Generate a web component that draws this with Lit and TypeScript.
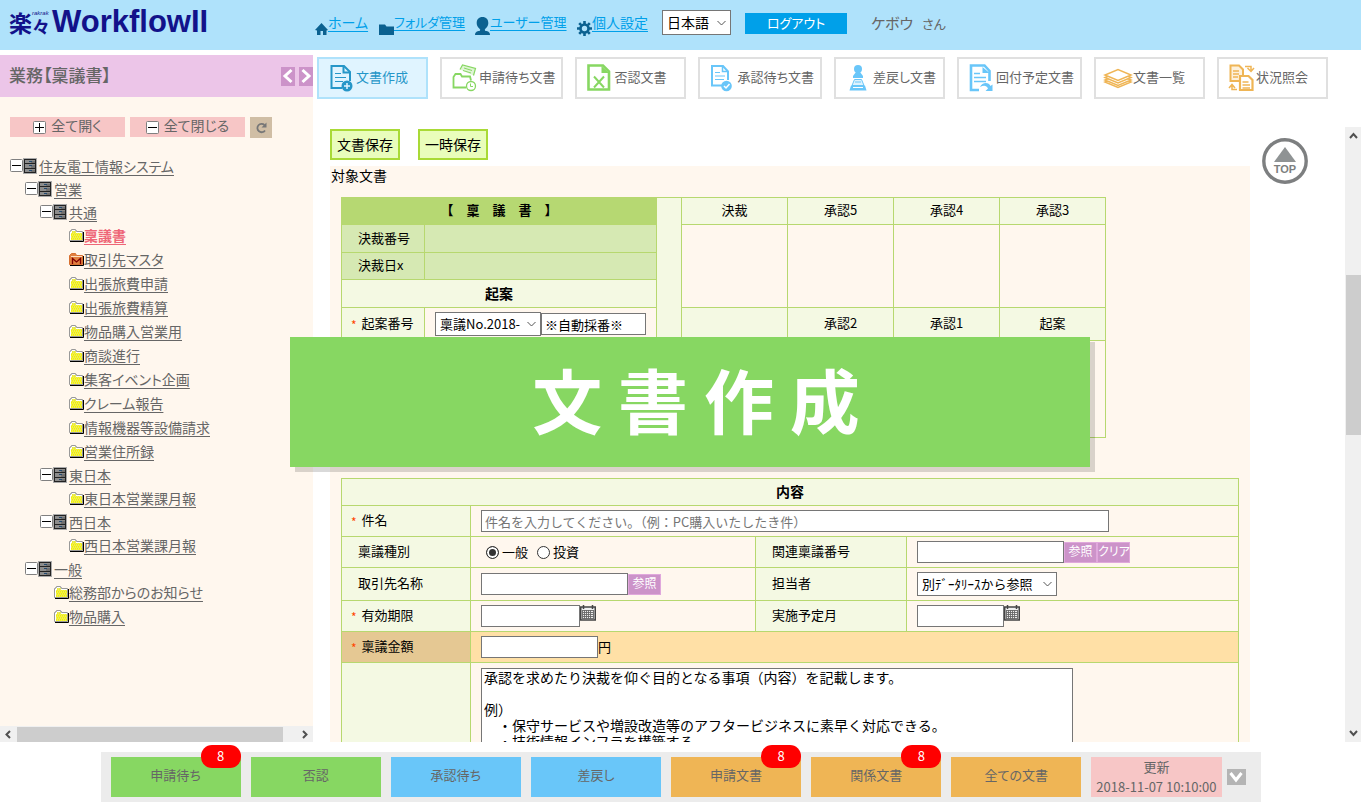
import { LitElement, html, css, svg, nothing } from "lit";
import { customElement } from "lit/decorators.js";
import { classMap } from "lit/directives/class-map.js";

type TreeNode = { level: number; kind: "cabinet" | "folder" | "master"; label: string; current?: boolean };

const TREE: TreeNode[] = [
  { level: 0, kind: "cabinet", label: "住友電工情報システム" },
  { level: 1, kind: "cabinet", label: "営業" },
  { level: 2, kind: "cabinet", label: "共通" },
  { level: 3, kind: "folder", label: "稟議書", current: true },
  { level: 3, kind: "master", label: "取引先マスタ" },
  { level: 3, kind: "folder", label: "出張旅費申請" },
  { level: 3, kind: "folder", label: "出張旅費精算" },
  { level: 3, kind: "folder", label: "物品購入営業用" },
  { level: 3, kind: "folder", label: "商談進行" },
  { level: 3, kind: "folder", label: "集客イベント企画" },
  { level: 3, kind: "folder", label: "クレーム報告" },
  { level: 3, kind: "folder", label: "情報機器等設備請求" },
  { level: 3, kind: "folder", label: "営業住所録" },
  { level: 2, kind: "cabinet", label: "東日本" },
  { level: 3, kind: "folder", label: "東日本営業課月報" },
  { level: 2, kind: "cabinet", label: "西日本" },
  { level: 3, kind: "folder", label: "西日本営業課月報" },
  { level: 1, kind: "cabinet", label: "一般" },
  { level: 2, kind: "folder", label: "総務部からのお知らせ" },
  { level: 2, kind: "folder", label: "物品購入" },
];

const toggleIcon = (plus: boolean) => html`<svg class="ic" width="13" height="13" viewBox="0 0 13 13">
  <rect x=".5" y=".5" width="12" height="12" rx="1" fill="#fff" stroke="#808080" />
  <path d=${plus ? "M2 6.5h9M6.5 2v9" : "M2 6.5h9"} stroke="#000" fill="none" />
</svg>`;

const cabinetIcon = html`<svg class="ic" width="14" height="16" viewBox="0 0 14 16">
  <rect width="14" height="16" fill="#aaa" />
  <rect x="1" y="1" width="12" height="14" fill="#222" />
  <path d="M2 2h10v3H2zM2 6h10v4H2zM2 11h10v3H2z" fill="#8c8c8c" />
  <path d="M8 3h4v2H8zM8 7h4v3H8zM8 12h4v2H8z" fill="#707070" />
  <path d="M6 3h3v1H6zM6 7h3v1H6zM6 12h3v1H6z" fill="#234a70" />
</svg>`;

const folderIcon = html`<svg class="ic" width="15" height="13" viewBox="0 0 15 13">
  <path d="M1 12.5h13.5V3" stroke="#000" fill="none" />
  <path d="M.5 11.5v-9h1v-1h1v-1h4v1h1v1h6v9z" fill="#fff" stroke="#999" />
  <path d="M2 11V4h1V2h4v2h6v7z" fill="#e6e66a" />
  <path d="M3 4.5h10M2 6.5h11M3 8.5h10M2 10.5h11" stroke="#ffff00" stroke-dasharray="1 1" />
  <path d="M2 5.5h11M3 7.5h10M2 9.5h11M3 3h3" stroke="#f4f000" stroke-dasharray="1 1" />
</svg>`;

const masterIcon = html`<svg class="ic" width="15" height="13" viewBox="0 0 15 13">
  <path d="M1 12.5h13.5V3" stroke="#000" fill="none" />
  <path d="M.5 11.5v-9l2-2h4l1 2h6v9z" fill="#e08040" stroke="#d87030" />
  <path d="M2 3.5h11" stroke="#ffe0c0" />
  <path d="M3.5 11V5.5L7.5 9l4-3.500V11" stroke="#800000" stroke-width="1.3" fill="none" />
</svg>`;

const TAB_ICONS = {
  create: svg`<path d="M13 24H2.500V2h12.500l6 6v9" fill="none" stroke="#2596c8" stroke-width="2"/>
    <path d="M14.500 2v6.500H21" fill="none" stroke="#2596c8" stroke-width="2"/>
    <path d="M6 9.500h6M6 13.500h11M6 17.500h8" stroke="#2596c8" stroke-width="1.200"/>
    <circle cx="18" cy="22" r="5.500" fill="#2596c8"/><path d="M15 22h6M18 19v6" stroke="#e0f4ff" stroke-width="1.500"/>`,
  wait: svg`<path d="M8 5.500l2.500-4.500 13 3.500-2 7" fill="#dff5d4" stroke="#87d762" stroke-width="1.200"/>
    <path d="M12 4l8 2.500M11 6.500l8 2.500" stroke="#87d762"/>
    <path d="M14 23.500H1.500V13l2-3H8.500l1.500 2.500h8l1 4" fill="none" stroke="#87d762" stroke-width="1.800"/>
    <circle cx="19" cy="22" r="4.500" fill="#fff" stroke="#87d762" stroke-width="1.300"/><path d="M18.500 19.500v3h2.500" fill="none" stroke="#87d762"/>`,
  deny: svg`<path d="M1.500 1.500h14.500l6 6v18h-20.500z" fill="none" stroke="#87d762" stroke-width="2.600"/><path d="M14.500 2v7h7.500z" fill="#87d762"/>
    <path d="M7 12.500l10 11M17 12.500L7 23.500" stroke="#87d762" stroke-width="2"/>`,
  approve: svg`<path d="M12 21.500H2V2h11l5 5.500v8.500" fill="none" stroke="#69c6f9" stroke-width="2"/><path d="M12.500 2v5.500H18" fill="none" stroke="#69c6f9" stroke-width="1.500"/>
    <path d="M5 8.500h5M5 12h10M5 15.500h9" stroke="#69c6f9" stroke-width="1.200"/>
    <circle cx="16.500" cy="22" r="5.300" fill="#69c6f9"/><path d="M14 22l2 2 3.500-4" stroke="#fff" stroke-width="1.500" fill="none"/>`,
  back: svg`<circle cx="12" cy="5" r="4" fill="#69c6f9"/><path d="M10 8h4l3 4v2H7v-2z" fill="#69c6f9"/>
    <path d="M8.500 15.500h7l2.500 6H6z" fill="#dff2fd" stroke="#69c6f9"/><path d="M9 18h6" stroke="#69c6f9"/>
    <path d="M5 21.500h14l1.500 5h-17z" fill="#69c6f9"/><path d="M7 23.500h10" stroke="#fff"/>`,
  pass: svg`<path d="M10 26H2V1.500h13.500l5 5.500v10" fill="none" stroke="#69c6f9" stroke-width="2.600"/><path d="M13.500 3v6h7z" fill="#69c6f9"/>
    <path d="M5 9.500h6M5 13.500h12M5 17.500h12" stroke="#69c6f9" stroke-width="1.400"/>
    <path d="M11 23c2-5 9-5 10.500-1l2-1.500v6.500h-7l2.500-2.500c-1.500-3-4-3.500-8-1.500z" fill="#69c6f9"/>`,
  list: svg`<g fill="#fff" stroke="#efb555" stroke-width="1.500"><path d="M-1 18l13 5.500 13-5.500-13-5.500z"/><path d="M-1 16l13 5.500 13-5.500-13-5.500z"/><path d="M-1 13.500l13 5.500 13-5.500-13-5.500z"/><path d="M-1 11l13 5.500 13-5.500-13-5.500z"/></g>`,
  status: svg`<path d="M1.500 1.500h8.500l4 4V17H1.500z" fill="#fdf1dc" stroke="#efb555" stroke-width="2"/><path d="M4 7h6M4 10h6M4 13h5" stroke="#efb555" stroke-width="1.500"/>
    <path d="M11 12h8.500l4 4v10H11z" fill="#fff" stroke="#efb555" stroke-width="2.200"/><path d="M13.500 18h6M13.500 21h7.500M13.500 24h7.500" stroke="#efb555" stroke-width="1.400"/>
    <path d="M16 2.500h6v4M18.500 4l3.500 3.500L25 4M8 25.500H3v-4M0 24l3-3.500L6 24" fill="none" stroke="#efb555" stroke-width="1.500"/>`,
};

const TABS: { icon: keyof typeof TAB_ICONS; label: string; active?: boolean }[] = [
  { icon: "create", label: "文書作成", active: true },
  { icon: "wait", label: "申請待ち文書" },
  { icon: "deny", label: "否認文書" },
  { icon: "approve", label: "承認待ち文書" },
  { icon: "back", label: "差戻し文書" },
  { icon: "pass", label: "回付予定文書" },
  { icon: "list", label: "文書一覧" },
  { icon: "status", label: "状況照会" },
];

const NAV = [
  { label: "ホーム", w: "n1", icon: svg`<path d="M0 8l6.500-7L13 8l-1.500.500V13H8V9H5.500v4H2V8.500z" fill="#0b6190"/>` },
  { label: "フォルダ管理", w: "n2", icon: svg`<path d="M0 3.500V2.500h6l1.500 2H15V13H0z" fill="#0b6190"/>` },
  { label: "ユーザー管理", w: "n3", icon: svg`<path d="M7.500-5c3.800 0 5.800 2.500 5.800 6S11 6 9.800 7.500c0 1 .5 1.500 1.700 1.500C14 9.500 15 11 15 13H0c0-2 1-3.500 3.500-4 1.200 0 1.700-.5 1.700-1.500C4 6 1.700 4.500 1.700 1s2-6 5.800-6z" fill="#0b6190"/>` },
  { label: "個人設定", w: "n4", icon: svg`<circle cx="7.500" cy="6.500" r="4" fill="none" stroke="#0b6190" stroke-width="2.600"/><path d="M7.500-1v3M7.500 11v3M0 6.500h3M12 6.500h3M2.200 1.200l2 2M10.800 9.800l2 2M12.800 1.200l-2 2M4.200 9.800l-2 2" stroke="#0b6190" stroke-width="2.600"/>` },
];

const FOOTER = [
  { label: "申請待ち", tone: "green", count: 8 },
  { label: "否認", tone: "green" },
  { label: "承認待ち", tone: "blue" },
  { label: "差戻し", tone: "blue" },
  { label: "申請文書", tone: "orange", count: 8 },
  { label: "関係文書", tone: "orange", count: 8 },
  { label: "全ての文書", tone: "orange" },
];

const PURPOSE = `承認を求めたり決裁を仰ぐ目的となる事項（内容）を記載します。

例）
　・保守サービスや増設改造等のアフタービジネスに素早く対応できる。
　・技術情報インフラを構築する`;

const base = css`
  * { box-sizing: border-box; }
  button, input, select, textarea { font: inherit; margin: 0; border-radius: 0; }
  button { padding: 0; border: 0; cursor: pointer; }
  .ic { display: block; flex: none; overflow: visible; }
`;

@customElement("wf-header")
class WfHeader extends LitElement {
  static styles = [base, css`
    :host { display: flex; align-items: center; height: 50px; background: #afe2fb; color: #666; }
    .logo { display: flex; align-items: center; width: 315px; padding: 0 0 6px 9px; color: #12128a; white-space: nowrap; flex: none; height: 50px; }
    .raku { font-size: 23px; line-height: 26px; font-weight: 700; }
    .stack { display: flex; flex-direction: column; width: 20px; }
    .noma { font-size: 18px; line-height: 18px; font-weight: 700; }
    .tiny { font: italic 6px/7px "Liberation Sans", sans-serif; }
    .name { font: 700 31px/44px "Liberation Sans", sans-serif; }
    nav { display: flex; }
    a { display: flex; align-items: flex-end; height: 24px; color: #00a0e9; font-size: 14px; line-height: 20px; text-underline-offset: 3px; white-space: nowrap; font-feature-settings: "palt"; margin-bottom: 4px; text-decoration: none; }
    a span { text-decoration: underline; margin-bottom: 3px; }
    .n1 { width: 64px; } .n2 { width: 96px; font-size: 13px; } .n3 { width: 102px; font-size: 13px; } .n4 { width: 85px; }
    select { width: 69px; height: 25px; margin-bottom: 5px; border: 1px solid #767676; background: #fff url("data:image/svg+xml,%3Csvg xmlns='http://www.w3.org/2000/svg' width='9' height='6'%3E%3Cpath d='M.5 1l4 4 4-4' fill='none' stroke='%23555'/%3E%3C/svg%3E") no-repeat right 4px center; appearance: none; font-size: 14px; line-height: 20px; padding: 0 0 2px 4px; color: #000; }
    .out { width: 102px; height: 21px; margin: 0 24px 3px 14px; background: #00a0e9; color: #fff; font-size: 13px; line-height: 18px; padding-bottom: 2px; font-feature-settings: "palt"; }
    .user { font-size: 15px; margin-bottom: 6px; font-feature-settings: "palt"; }
    .san { font-size: 13px; margin-left: 9px; }
  `];
  render() {
    return html`
      <div class="logo"><span class="raku">楽</span><span class="stack"><span class="tiny">rakrak</span><span class="noma">々</span></span><span class="name">WorkflowII</span></div>
      <nav>${NAV.map((n) => html`<a href="#" class=${n.w}><svg class="ic" width=${n.w === "n1" ? 13 : 15} height="13" viewBox="0 0 ${n.w === "n1" ? 13 : 15} 13">${n.icon}</svg><span>${n.label}</span></a>`)}</nav>
      <select aria-label="言語"><option>日本語</option></select>
      <button class="out">ログアウト</button>
      <span class="user">ケボウ<span class="san">さん</span></span>
    `;
  }
}

@customElement("wf-sidebar")
class WfSidebar extends LitElement {
  static styles = [base, css`
    :host { display: flex; flex-direction: column; width: 313px; flex: none; background: #fff7ee; color: #666; min-height: 0; }
    .title { display: flex; align-items: center; gap: 4px; height: 42px; padding-left: 9px; background: #ecc5e8; flex: none; }
    h1 { flex: 1; margin: 0; font-size: 17px; line-height: 24px; font-weight: 500; font-feature-settings: "palt"; padding-bottom: 2px; }
    .arrow { width: 14px; height: 19px; background: #cc93c9; display: grid; place-items: center; }
    .tools { display: flex; gap: 5px; padding: 20px 10px 0; height: 57px; flex: none; }
    .tool { display: flex; align-items: center; justify-content: center; gap: 5px; width: 115px; height: 20px; background: #f7c6c6; color: #666; font-size: 14px; line-height: 16px; font-feature-settings: "palt"; }
    .tool span { margin-bottom: 4px; }
    .reload { width: 22px; height: 21px; background: #d0bea5; display: grid; place-items: center; }
    .tree { flex: 1; margin: 0; padding: 0; list-style: none; overflow: hidden; min-height: 0; }
    li { display: flex; align-items: center; height: 24px; }
    li.cabinet { height: 23px; }
    li.cabinet a { margin-left: 2px; }
    li a { color: #666; font-size: 14px; line-height: 20px; text-underline-offset: 3px; white-space: nowrap; font-feature-settings: "palt"; }
    li.current a { color: #ee6677; font-weight: 700; }
    .l2 { padding-left: 54px; } .l3 { padding-left: 69px; }
    .cabinet.l0 { padding-left: 10px; } .cabinet.l1 { padding-left: 25px; } .cabinet.l2 { padding-left: 40px; }
    .toggle { background: none; }
    .bar { display: flex; align-items: center; height: 16px; background: #f0f0f0; flex: none; }
    .bar .ic { margin: 0 4px; }
    .thumb { flex: 1; height: 15px; background: #cdcdcd; margin-right: 13px; }
  `];
  render() {
    return html`
      <div class="title">
        <h1>業務【稟議書】</h1>
        <button class="arrow" aria-label="縮小"><svg class="ic" width="10" height="14" viewBox="0 0 10 14"><path d="M8.500 1L2 7l6.500 6" fill="none" stroke="#fff" stroke-width="3"/></svg></button>
        <button class="arrow" aria-label="拡大"><svg class="ic" width="10" height="14" viewBox="0 0 10 14"><path d="M1.500 1L8 7l-6.500 6" fill="none" stroke="#fff" stroke-width="3"/></svg></button>
      </div>
      <div class="tools">
        <button class="tool">${toggleIcon(true)}<span>全て開く</span></button>
        <button class="tool">${toggleIcon(false)}<span>全て閉じる</span></button>
        <button class="reload" aria-label="再読込"><svg class="ic" width="11" height="11" viewBox="0 0 11 11"><path d="M9 8.500A4.200 4.200 0 1 1 8.500 3" fill="none" stroke="#777" stroke-width="1.800"/><path d="M10.500.5v5H5.500z" fill="#777"/></svg></button>
      </div>
      <ul class="tree">
        ${TREE.map((n) => html`<li class=${classMap({ [n.kind]: true, ["l" + n.level]: true, current: !!n.current })}>
          ${n.kind === "cabinet"
            ? html`<button class="toggle" aria-label="${n.label}を閉じる">${toggleIcon(false)}</button>${cabinetIcon}`
            : n.kind === "master" ? masterIcon : folderIcon}<a href="#">${n.label}</a>
        </li>`)}
      </ul>
      <div class="bar">
        <svg class="ic" width="9" height="9" viewBox="0 0 9 9"><path d="M6 1L2.500 4.500 6 8" fill="none" stroke="#505050" stroke-width="2"/></svg>
        <div class="thumb"></div>
        <svg class="ic" width="9" height="9" viewBox="0 0 9 9"><path d="M3 1l3.500 3.500L3 8" fill="none" stroke="#505050" stroke-width="2"/></svg>
      </div>
    `;
  }
}

@customElement("wf-form")
class WfForm extends LitElement {
  static styles = [base, css`
    :host { display: block; color: #000; font-size: 13px; }
    .actions { display: flex; gap: 18px; }
    .save { width: 70px; height: 31px; border: 2px solid #a9da36; background: #e9fdbb; font-size: 14px; line-height: 20px; padding-bottom: 2px; color: #000; }
    .sheet { margin-top: 6px; padding: 0 11px 20px; background: #fff7ee; }
    .caption { margin: 0 -10px; font-size: 14px; line-height: 18px; height: 31px; }
    table { border-collapse: collapse; table-layout: fixed; }
    th, td { border: 1px solid #b7d86f; padding: 0 0 0 10px; text-align: left; font-weight: 400; line-height: 18px; }
    th { background: #f4f9e3; padding: 0 0 2px 16px; }
    th.sec { text-align: center; font-weight: 700; font-size: 14px; padding: 0 0 2px; }
    th.req { padding-left: 9px; }
    .req label::before { content: "*"; color: #ff4500; font-size: 12px; line-height: 12px; margin-right: 5px; vertical-align: -2px; }
    .head { width: 765px; margin-bottom: 40px; }
    .head .name { background: #b6d872; font-size: 13px; }
    .head .dark { background: #d6e9b3; }
    .head .mid { text-align: center; padding: 0 0 2px; }
    .c1 { width: 83px; } .c2 { width: 232px; } .c3 { width: 25px; } .c4 { width: 106px; }
    .d1 { width: 129px; } .d2 { width: 285px; } .d3 { width: 151px; }
    .h27 { height: 27px; } .h28 { height: 28px; } .h31 { height: 31px; } .h33 { height: 33px; } .h97 { height: 97px; } .tall { height: 160px; }
    .body { width: 100%; }
    .row { display: flex; align-items: center; }
    input[type="text"] { height: 22px; border: 1px solid #767676; background: #fff; padding: 0 3px; font-size: 13px; }
    input::placeholder { color: #757575; opacity: 1; }
    .w87 { width: 87px; } .w99 { width: 99px; } .w105 { width: 105px; } .w117 { width: 117px; } .w147 { width: 147px; }
    .wide { width: 83%; }
    select { height: 24px; border: 1px solid #767676; background: #fff url("data:image/svg+xml,%3Csvg xmlns='http://www.w3.org/2000/svg' width='9' height='6'%3E%3Cpath d='M.5 1l4 4 4-4' fill='none' stroke='%23555'/%3E%3C/svg%3E") no-repeat right 4px center; appearance: none; font-size: 13px; padding: 0 0 0 4px; color: #000; }
    .s106 { width: 106px; } .s140 { width: 140px; }
    .ref { width: 33px; height: 21px; background: #cc93c9; border: 1px solid #e0a8dc; color: #fff; font-size: 12px; line-height: 16px; padding-bottom: 2px; font-feature-settings: "palt"; white-space: nowrap; }
    .radio { width: 13px; height: 13px; margin: 0 3px 0 5px; appearance: none; border: 1px solid #333; border-radius: 50%; background: #fff; }
    .radio:checked { background: #333; box-shadow: inset 0 0 0 2px #fff; }
    .radio + label { margin-right: 4px; }
    .cal { background: none; margin-bottom: 6px; }
    .money th { background: #e5c893; } .money td { background: #ffe0a6; }
    td.top { vertical-align: top; padding-top: 5px; }
    textarea { display: block; width: 592px; height: 150px; resize: none; border: 1px solid #767676; padding: 0 2px; font-size: 14px; line-height: 16px; overflow: hidden; background: #fff; color: #000; }
  `];
  private cal(label: string) {
    return html`<button class="cal" aria-label=${label}><svg class="ic" width="16" height="16" viewBox="0 0 16 16">
      <rect x=".75" y="2" width="14.500" height="13" fill="#eee" stroke="#444" stroke-width="1.500"/>
      <path d="M3.500 0v4M12.500 0v4" stroke="#444" stroke-width="1.500"/>
      <path d="M2.500 5.500h11M2.500 7.500h11M2.500 9.500h11M2.500 11.500h11M2.500 13.500h11M2.500 5v9M4.500 5v9M6.500 5v9M8.500 5v9M10.500 5v9M13.500 5v9" stroke="#666" stroke-width=".9"/>
    </svg></button>`;
  }
  render() {
    return html`
      <div class="actions"><button class="save">文書保存</button><button class="save">一時保存</button></div>
      <div class="sheet">
        <div class="caption">対象文書</div>
        <table class="head">
          <colgroup><col class="c1"><col class="c2"><col class="c3"><col class="c4"><col class="c4"><col class="c4"><col class="c4"></colgroup>
          <tr class="h27"><th class="sec name" colspan="2">【　稟　議　書　】</th><th rowspan="6"></th>
            <th class="mid">決裁</th><th class="mid">承認5</th><th class="mid">承認4</th><th class="mid">承認3</th></tr>
          <tr class="h28"><th class="dark">決裁番号</th><td class="dark"></td><td rowspan="3"></td><td rowspan="3"></td><td rowspan="3"></td><td rowspan="3"></td></tr>
          <tr class="h27"><th class="dark">決裁日x</th><td class="dark"></td></tr>
          <tr class="h28"><th class="sec" colspan="2">起案</th></tr>
          <tr class="h33"><th class="req"><label for="no">起案番号</label></th>
            <td><div class="row"><select id="no" class="s106"><option>稟議No.2018-</option></select><input type="text" class="w105" aria-label="起案番号の連番" value="※自動採番※"></div></td>
            <th class="mid"></th><th class="mid">承認2</th><th class="mid">承認1</th><th class="mid">起案</th></tr>
          <tr class="h97"><th></th><td></td><td></td><td></td><td></td><td></td></tr>
        </table>
        <table class="body">
          <colgroup><col class="d1"><col class="d2"><col class="d3"><col></colgroup>
          <tr class="h27"><th class="sec" colspan="4">内容</th></tr>
          <tr class="h31"><th class="req"><label for="subject">件名</label></th><td colspan="3"><div class="row"><input id="subject" type="text" class="wide" placeholder="件名を入力してください。（例：PC購入いたしたき件）"></div></td></tr>
          <tr class="h31"><th>稟議種別</th>
            <td><div class="row"><input type="radio" class="radio" name="kind" id="k1" checked><label for="k1">一般</label><input type="radio" class="radio" name="kind" id="k2"><label for="k2">投資</label></div></td>
            <th><label for="rel">関連稟議番号</label></th>
            <td><div class="row"><input id="rel" type="text" class="w147"><button class="ref">参照</button><button class="ref">クリア</button></div></td></tr>
          <tr class="h33"><th><label for="client">取引先名称</label></th>
            <td><div class="row"><input id="client" type="text" class="w147"><button class="ref">参照</button></div></td>
            <th><label for="person">担当者</label></th>
            <td><div class="row"><select id="person" class="s140"><option>別ﾃﾞｰﾀﾘｰｽから参照</option></select></div></td></tr>
          <tr class="h31"><th class="req"><label for="limit">有効期限</label></th>
            <td><div class="row"><input id="limit" type="text" class="w99">${this.cal("有効期限を選択")}</div></td>
            <th><label for="month">実施予定月</label></th>
            <td><div class="row"><input id="month" type="text" class="w87">${this.cal("実施予定月を選択")}</div></td></tr>
          <tr class="h31 money"><th class="req"><label for="money">稟議金額</label></th>
            <td colspan="3"><div class="row"><input id="money" type="text" class="w117">円</div></td></tr>
          <tr class="tall"><th></th><td class="top" colspan="3"><textarea aria-label="目的" .value=${PURPOSE}></textarea></td></tr>
        </table>
      </div>
    `;
  }
}

@customElement("wf-footer")
class WfFooter extends LitElement {
  static styles = [base, css`
    :host { display: flex; justify-content: center; padding-top: 10px; color: #666; }
    .bar { display: flex; align-items: flex-start; gap: 10px; width: 1160px; height: 50px; padding: 5px 10px; background: #ececec; }
    button { position: relative; flex: 1; height: 40px; color: #666; font-size: 13px; line-height: 18px; padding-bottom: 5px; font-feature-settings: "palt"; }
    .green { background: #87d762; } .blue { background: #69c6f9; } .orange { background: #efb555; }
    .pink { background: #f7c6c6; line-height: 20px; padding: 0 0 6px; white-space: nowrap; }
    .badge { position: absolute; right: 0; top: -12px; width: 40px; height: 23px; border-radius: 11px; background: #f00; color: #fff; line-height: 22px; font-size: 13px; text-align: center; }
    .more { flex: none; width: 19px; height: 16px; margin: 12px 5px 0 -5px; padding: 0; background: #b4b4b4; display: grid; place-items: center; }
  `];
  render() {
    return html`<div class="bar">
      ${FOOTER.map((f) => html`<button class=${f.tone}>${f.label}${f.count ? html`<span class="badge">${f.count}</span>` : nothing}</button>`)}
      <button class="pink">更新<br>2018-11-07 10:10:00</button>
      <button class="more" aria-label="開く"><svg class="ic" width="14" height="10" viewBox="0 0 14 10"><path d="M1.500 1L7 8l5.500-7" fill="none" stroke="#fff" stroke-width="3"/></svg></button>
    </div>`;
  }
}

@customElement("app-root")
class AppRoot extends LitElement {
  static styles = [base, css`
    :host { display: flex; flex-direction: column; height: 100vh; overflow: hidden; position: relative; background: #fff; font-family: "Noto Sans CJK JP", sans-serif; }
    .middle { flex: 1; display: flex; gap: 4px; min-height: 0; padding-top: 5px; }
    main { flex: 1; min-width: 0; display: flex; flex-direction: column; padding-top: 2px; }
    .tabs { display: flex; gap: 12px; margin-bottom: 28px; }
    .tab { display: flex; align-items: center; gap: 3px; min-width: 111px; height: 42px; padding: 0 6px 0 10px; border: 2px solid #e0e0e0; background: #fff; color: #666; font-size: 13px; line-height: 20px; white-space: nowrap; font-feature-settings: "palt"; }
    .tab span { margin-bottom: 3px; }
    .tab.active { border-color: #afe2fb; background: #e0f4ff; color: #2596c8; }
    .view { flex: 1; min-height: 0; display: flex; }
    .page { flex: 1; min-width: 0; overflow: hidden; padding: 2px 0 0 13px; }
    .side { width: 95px; flex: none; padding: 11px 0 0 12px; }
    .top { background: none; }
    .toptext { font: 700 11px "Liberation Sans", sans-serif; }
    .scroll { width: 16px; flex: none; background: #f0f0f0; display: flex; flex-direction: column; align-items: center; padding: 5px 0; }
    .track { flex: 1; width: 15px; display: grid; grid-template-rows: 23fr 27fr 50fr; }
    .thumb { grid-row: 2; background: #cdcdcd; }
    .banner { position: absolute; left: 290px; top: 337px; width: 800px; height: 130px; background: #87d762; box-shadow: 5px 5px 0 rgba(0, 0, 0, 0.15); color: #fff; font-size: 70px; font-weight: 700; line-height: 124px; text-align: center; padding-left: 12px; }
  `];
  render() {
    return html`
      <wf-header></wf-header>
      <div class="middle">
        <wf-sidebar></wf-sidebar>
        <main>
          <div class="tabs">
            ${TABS.map((t) => html`<button class=${classMap({ tab: true, active: !!t.active })}>
              <svg class="ic" width="24" height="28" viewBox="0 0 24 28">${TAB_ICONS[t.icon]}</svg><span>${t.label}</span>
            </button>`)}
          </div>
          <div class="view">
            <div class="page"><wf-form></wf-form></div>
            <div class="side"><button class="top" aria-label="TOP"><svg class="ic" width="46" height="46" viewBox="0 0 46 46">
              <circle cx="23" cy="23" r="21.200" fill="#fff" stroke="#7d7f80" stroke-width="3.400"/>
              <path d="M23 9l11 15H12z" fill="#8f9394"/><text class="toptext" x="23" y="35" text-anchor="middle" fill="#7d7f80">TOP</text>
            </svg></button></div>
            <div class="scroll">
              <svg class="ic" width="9" height="8" viewBox="0 0 9 8"><path d="M1 6l3.500-4L8 6" fill="none" stroke="#505050" stroke-width="2"/></svg>
              <div class="track"><div class="thumb"></div></div>
              <svg class="ic" width="9" height="8" viewBox="0 0 9 8"><path d="M1 2l3.500 4L8 2" fill="none" stroke="#505050" stroke-width="2"/></svg>
            </div>
          </div>
        </main>
      </div>
      <wf-footer></wf-footer>
      <div class="banner">文 書 作 成</div>
    `;
  }
}
